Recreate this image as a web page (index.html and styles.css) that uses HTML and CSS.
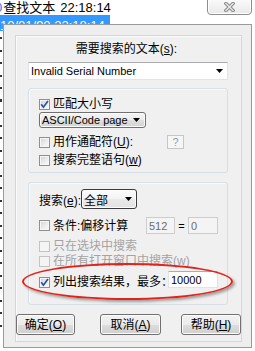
FILE: index.html
```html
<!DOCTYPE html>
<html>
<head>
<meta charset="utf-8">
<link rel="stylesheet" href="styles.css">
</head>
<body>
<div class="screen">
  <div class="list">
    <div class="row row-plain"><span class="cut">0</span><span class="title">查找文本</span><span class="time">22:18:14</span></div>
    <div class="row row-sel"><span>10/01/90 22:18:14</span></div>
    <div class="ticks"></div>
  </div>

  <div class="closebtn">
    <svg width="11" height="10" viewBox="0 0 11 10"><path d="M2 1.5L9 8.5M9 1.5L2 8.5" stroke="#8a8a8a" stroke-width="3.4" stroke-linecap="square"/><path d="M2 1.5L9 8.5M9 1.5L2 8.5" stroke="#ececec" stroke-width="1.3" stroke-linecap="square"/></svg>
  </div>

  <div class="dialog">
    <div class="panel">
      <div class="caption">需要搜索的文本(<u>s</u>):</div>
      <div class="textcombo">
        <span class="latin">Invalid Serial Number</span>
        <svg class="arrow" width="7" height="4" viewBox="0 0 7 4"><path d="M0 0H7L3.5 4Z" fill="#000"/></svg>
      </div>

      <div class="group g1">
        <div class="chk"><span class="box"><svg width="9" height="9" viewBox="0 0 9 9"><path d="M1.2 4.3L3.4 7.2L8 1" fill="none" stroke="#2d4f9f" stroke-width="1.7"/></svg></span><span>匹配大小写</span></div>
        <div class="dropdown dd-code"><span class="latin">ASCII/Code page</span><svg class="arrow" width="7" height="4" viewBox="0 0 7 4"><path d="M0 0H7L3.5 4Z" fill="#000"/></svg></div>
        <div class="line l-wild">
          <div class="chk w-wild"><span class="box"></span><span>用作通配符(<u>U</u>):</span></div>
          <span class="qbox">?</span>
        </div>
        <div class="chk l-whole"><span class="box"></span><span>搜索完整语句(<u>w</u>)</span></div>
      </div>

      <div class="group g2">
        <div class="line l-scope">
          <span class="w-scope">搜索(<u>e</u>):</span>
          <div class="dropdown dd-all"><span>全部</span><svg class="arrow" width="7" height="4" viewBox="0 0 7 4"><path d="M0 0H7L3.5 4Z" fill="#000"/></svg></div>
        </div>
        <div class="line l-cond">
          <div class="chk w-cond"><span class="box"></span><span>条件:偏移计算</span></div>
          <span class="field dis f-512">512</span>
          <span class="eq">=</span>
          <span class="field dis f-0">0</span>
        </div>
        <div class="chk off l-sel"><span class="box"></span><span>只在选块中搜索</span></div>
        <div class="chk off l-all"><span class="box"></span><span>在所有打开窗口中搜索(<u>w</u>)</span></div>
        <div class="line l-list">
          <div class="chk w-list"><span class="box"><svg width="9" height="9" viewBox="0 0 9 9"><path d="M1.2 4.3L3.4 7.2L8 1" fill="none" stroke="#2d4f9f" stroke-width="1.7"/></svg></span><span>列出搜索结果，最多：</span></div>
          <span class="field f-max">10000</span>
        </div>
        <div class="ring"></div>
      </div>

      <div class="buttons">
        <div class="btn b-ok">确定(<u>O</u>)</div>
        <div class="btn b-cancel">取消(<u>A</u>)</div>
        <div class="btn b-help">帮助(<u>H</u>)</div>
      </div>
    </div>
  </div>
</div>
</body>
</html>
```

FILE: styles.css
```css
* { box-sizing: border-box; }
html, body { margin: 0; padding: 0; }
body {
  width: 255px;
  height: 351px;
  overflow: hidden;
  background: #fff;
  font-family: "Liberation Sans", "Noto Sans CJK SC", sans-serif;
  font-size: 12px;
  color: #000;
}
.screen { position: relative; width: 255px; height: 351px; overflow: hidden; }

/* background list */
.list { display: flex; flex-direction: column; }
.row { white-space: nowrap; font-size: 13px; line-height: 15px; display: flex; }
.row-plain { height: 15px; }
.row-plain .cut { color: #3d6fd6; margin-left: -5px; }
.row-plain .title { margin-left: 1px; }
.row-plain .time { margin-left: 5px; }
.row-sel { height: 16px; width: 110px; background: #3399ff; color: #fff; padding-top: 3px; }
.ticks {
  width: 2px;
  height: 300px;
  background: repeating-linear-gradient(#fff 0, #fff 6px, #333 6px, #333 8px, #fff 8px, #fff 12.5px);
}

/* close button of the window behind */
.closebtn {
  position: absolute;
  left: 207px;
  top: -2px;
  width: 45px;
  height: 17px;
  border: 1px solid #8d8d8d;
  border-radius: 0 0 4px 4px;
  background: linear-gradient(#fbfbfb, #e9e9e9);
  box-shadow: inset 0 0 0 1px #fff;
  display: flex;
  align-items: center;
  justify-content: center;
  padding-top: 1px;
}

/* dialog */
.dialog {
  position: absolute;
  left: 3px;
  top: 24px;
  width: 249px;
  height: 324px;
  background: #eeeeee;
  border: 1px solid #9a9a9a;
  padding: 10px 9px 5px 11px;
}
.panel {
  width: 227px;
  height: 307px;
  border: 1px solid #d6d6d6;
  background: #f0f0f0;
  box-shadow: inset 1px 1px 0 #fbfbfb;
  display: flex;
  flex-direction: column;
}
.caption {
  margin-top: 6px;
  height: 15px;
  line-height: 15px;
  text-align: center;
  padding-right: 4px;
}
.latin { font-size: 11px; }
.arrow { flex: none; }

.textcombo {
  margin: 5px 0 0 12px;
  width: 200px;
  height: 18px;
  background: #fff;
  border: 1px solid #e2e3ea;
  border-top-color: #abadb3;
  display: flex;
  align-items: center;
  justify-content: space-between;
  padding: 0 4px 0 2px;
  line-height: 14px;
}

.group {
  margin-left: 12px;
  width: 200px;
  border: 1px solid #d5dfe5;
  border-radius: 3px;
  box-shadow: inset 1px 1px 0 #fafafa;
  display: flex;
  flex-direction: column;
  align-items: flex-start;
  padding-left: 10px;
}
.g1 { margin-top: 8px; padding-top: 8px; padding-bottom: 5px; }
.g2 { margin-top: 9px; padding-top: 6px; padding-bottom: 16px; position: relative; }

.line { display: flex; align-items: center; }
.chk {
  display: flex;
  align-items: center;
  height: 14px;
  line-height: 14px;
  white-space: nowrap;
}
.chk .box { margin-right: 3px; }
.box {
  flex: none;
  width: 11px;
  height: 11px;
  border: 1px solid #8e8f8f;
  background: linear-gradient(135deg, #cfd1d4 0%, #eeeeee 60%, #fafafa 100%);
  box-shadow: inset 0 0 0 1px #f6f6f6;
  display: flex;
  align-items: center;
  justify-content: center;
}
.chk.off { color: #a3a3a3; }
.chk.off .box { border-color: #c3c3c3; background: #f4f4f4; box-shadow: none; }

.dropdown {
  display: flex;
  align-items: center;
  justify-content: space-between;
  border: 1px solid #707070;
  border-radius: 3px;
  background: linear-gradient(#f4f4f4 0%, #ececec 50%, #dfdfdf 51%, #d3d3d3 100%);
  box-shadow: inset 0 0 0 1px #fbfbfb;
}
.dd-code { margin-top: 1px; width: 107px; height: 16px; padding: 0 5px 0 2px; line-height: 14px; }
.l-wild { margin-top: 7px; height: 14px; }
.w-wild { width: 128px; }
.qbox {
  width: 17px;
  height: 14px;
  border: 1px solid #c4c7c9;
  background: #f6f6f6;
  color: #9a9a9a;
  font-size: 11px;
  display: flex;
  align-items: center;
  justify-content: center;
}
.l-whole { margin-top: 4px; }

.l-scope { height: 20px; }
.w-scope { width: 42px; white-space: nowrap; }
.dd-all {
  width: 56px;
  height: 20px;
  padding: 0 4px 0 2px;
  border-color: #3b3b3b;
  background: linear-gradient(#fcfcfc 0%, #f3f3f3 50%, #e9e9e9 51%, #e2e2e2 100%);
  font-size: 12px;
}
.l-cond { margin-top: 8px; height: 17px; }
.w-cond { width: 107px; }
.field {
  height: 17px;
  border: 1px solid #e2e3ea;
  border-top-color: #abadb3;
  background: #fff;
  font-size: 11px;
  display: flex;
  align-items: center;
  padding-left: 2px;
}
.field.dis { background: #f4f4f4; border-color: #cdcdcd; color: #6d6d6d; }
.f-512 { width: 29px; }
.eq { width: 13px; text-align: center; font-size: 11px; }
.f-0 { width: 30px; }
.l-sel { margin-top: 5px; }
.l-all { margin-top: 1px; }
.l-list { margin-top: 3px; height: 17px; align-items: flex-start; }
.w-list { width: 129px; margin-top: 4px; }
.f-max { width: 50px; }

.ring {
  position: absolute;
  left: -7px;
  top: 80px;
  width: 211px;
  height: 37px;
  border: 2px solid #e2231a;
  border-radius: 50%;
  box-shadow: 2px 2px 3px rgba(0, 0, 0, 0.35);
}

.buttons { display: flex; margin-top: 9px; }
.btn {
  height: 21px;
  border: 1px solid #707070;
  border-radius: 3px;
  background: linear-gradient(#f2f2f2 0%, #ebebeb 50%, #dddddd 51%, #cfcfcf 100%);
  box-shadow: inset 0 0 0 1px #fcfcfc;
  display: flex;
  align-items: center;
  justify-content: center;
  white-space: nowrap;
  line-height: 14px;
}
.b-ok { width: 59px; }
.b-cancel { width: 61px; margin-left: 25px; }
.b-help { width: 60px; margin-left: 20px; }
```
